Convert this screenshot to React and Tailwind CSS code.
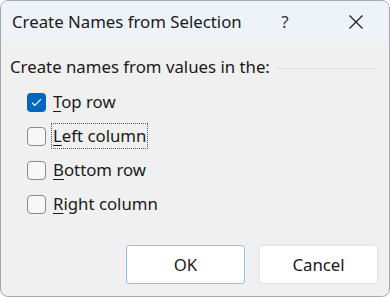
import React from "react";

const font = { fontFamily: '"Segoe UI", "Noto Sans", "Open Sans", sans-serif' };

function Box({ checked, label, u, rest, focus }) {
  return (
    <div className="flex items-center h-[34px]">
      {checked ? (
        <div className="w-[19px] h-[19px] rounded-[4px] bg-[#0067c0] flex items-center justify-center shrink-0">
          <svg width="11" height="9" viewBox="0 0 11 9">
            <path d="M1 4.8 L3.8 7.5 L10 1.2" fill="none" stroke="white" strokeWidth="1.2" />
          </svg>
        </div>
      ) : (
        <div className="w-[19px] h-[19px] rounded-[4px] border border-[#8a8a8a] bg-[#f7f7f7] shrink-0" />
      )}
      <span
        className={
          "ml-[6px] text-[16.8px] text-[#1a1a1a] leading-[24px] px-[1px] " +
          (focus ? "outline outline-1 outline-dotted outline-[#555]" : "")
        }
      >
        <span className="underline underline-offset-[3px]">{u}</span>
        {rest}
      </span>
    </div>
  );
}

export default function App() {
  return (
    <div className="w-[390px] h-[297px] bg-white" style={font}>
      <div className="w-full h-full rounded-[8px] border border-[#a8a8a8] overflow-hidden flex flex-col bg-[#f0f0f0]">
        <div className="h-[41px] bg-[#eef3fa] flex items-center shrink-0">
          <div className="pl-[11px] text-[16.8px] text-[#1a1a1a] flex-1">Create Names from Selection</div>
          <div className="w-[50px] text-center text-[17px] text-[#333] mr-[23px]">?</div>
          <div className="w-[46px] h-full flex items-center justify-center mr-[10px]">
            <svg width="16" height="16" viewBox="0 0 16 16">
              <path d="M1.5 1.5 L14.5 14.5 M14.5 1.5 L1.5 14.5" stroke="#1a1a1a" strokeWidth="1.2" />
            </svg>
          </div>
        </div>
        <div className="flex-1 flex flex-col">
          <div className="flex items-center mt-[14px] pl-[9px] pr-[11px]">
            <span className="text-[16.8px] text-[#1a1a1a] leading-[22px]">Create names from values in the:</span>
            <div className="flex-1 h-[1px] bg-[#dfdfdf] ml-[6px] mt-[2px]" />
          </div>
          <div className="flex flex-col pl-[26px] mt-[7px]">
            <Box checked u="T" rest="op row" />
            <Box u="L" rest="eft column" focus />
            <Box u="B" rest="ottom row" />
            <Box u="R" rest="ight column" />
          </div>
          <div className="flex justify-end gap-[14px] pr-[11px] mt-[24px]">
            <button className="w-[119px] h-[39px] bg-white border border-[#8ec0ea] rounded-[3px] text-[16.8px] text-[#1a1a1a]">OK</button>
            <button className="w-[119px] h-[39px] bg-white border border-[#e3e3e3] rounded-[3px] text-[16.8px] text-[#1a1a1a]">Cancel</button>
          </div>
        </div>
      </div>
    </div>
  );
}
